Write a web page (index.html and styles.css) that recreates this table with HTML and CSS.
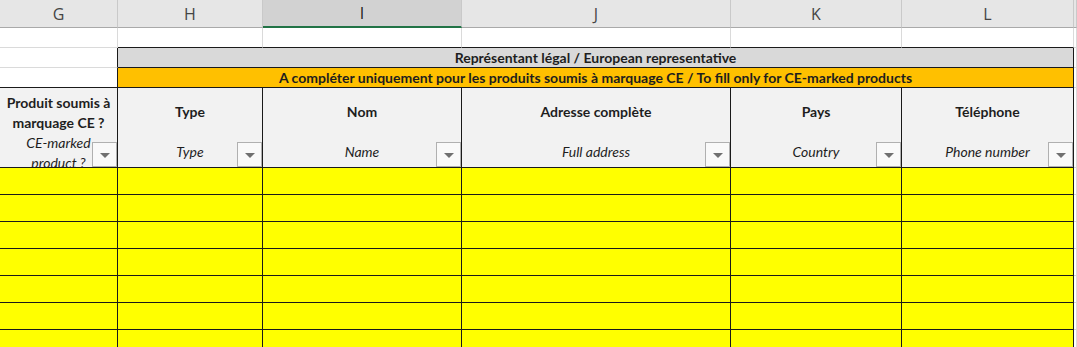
FILE: index.html
```html
<!DOCTYPE html>
<html lang="fr">
<head>
    <meta charset="UTF-8">
    <meta name="viewport" content="width=device-width, initial-scale=1.0">
    <title>Représentant légal</title>
    <link rel="stylesheet" href="styles.css">
</head>
<body>
    <div class="sheet">
        <!-- column letters -->
        <div class="col-head">G</div>
        <div class="col-head">H</div>
        <div class="col-head selected">I</div>
        <div class="col-head">J</div>
        <div class="col-head">K</div>
        <div class="col-head">L</div>
        <div class="col-head"></div>

        <!-- empty first row -->
        <div class="cell"></div>
        <div class="cell edge-bottom"></div>
        <div class="cell edge-bottom"></div>
        <div class="cell edge-bottom"></div>
        <div class="cell edge-bottom"></div>
        <div class="cell edge-bottom"></div>
        <div class="cell"></div>

        <!-- group titles -->
        <div class="cell edge-right"></div>
        <div class="cell band grey">Représentant légal / European representative</div>
        <div class="cell"></div>

        <div class="cell edge-right edge-bottom"></div>
        <div class="cell band orange">A compléter uniquement pour les produits soumis à marquage CE / To fill only for CE-marked products</div>
        <div class="cell"></div>

        <!-- field headers -->
        <div class="cell head head-tall">
            <span class="fr">Produit soumis à</span>
            <span class="fr">marquage CE ?</span>
            <span class="en">CE-marked</span>
            <span class="en">product ?</span>
            <span class="filter"></span>
        </div>
        <div class="cell head">
            <span class="fr">Type</span>
            <span class="en">Type</span>
            <span class="filter"></span>
        </div>
        <div class="cell head">
            <span class="fr">Nom</span>
            <span class="en">Name</span>
            <span class="filter"></span>
        </div>
        <div class="cell head">
            <span class="fr">Adresse complète</span>
            <span class="en">Full address</span>
            <span class="filter"></span>
        </div>
        <div class="cell head">
            <span class="fr">Pays</span>
            <span class="en">Country</span>
            <span class="filter"></span>
        </div>
        <div class="cell head">
            <span class="fr">Téléphone</span>
            <span class="en">Phone number</span>
            <span class="filter"></span>
        </div>
        <div class="cell"></div>

        <!-- input rows -->
        <div class="cell fill"></div><div class="cell fill"></div><div class="cell fill"></div><div class="cell fill"></div><div class="cell fill"></div><div class="cell fill"></div><div class="cell"></div>
        <div class="cell fill"></div><div class="cell fill"></div><div class="cell fill"></div><div class="cell fill"></div><div class="cell fill"></div><div class="cell fill"></div><div class="cell"></div>
        <div class="cell fill"></div><div class="cell fill"></div><div class="cell fill"></div><div class="cell fill"></div><div class="cell fill"></div><div class="cell fill"></div><div class="cell"></div>
        <div class="cell fill"></div><div class="cell fill"></div><div class="cell fill"></div><div class="cell fill"></div><div class="cell fill"></div><div class="cell fill"></div><div class="cell"></div>
        <div class="cell fill"></div><div class="cell fill"></div><div class="cell fill"></div><div class="cell fill"></div><div class="cell fill"></div><div class="cell fill"></div><div class="cell"></div>
        <div class="cell fill"></div><div class="cell fill"></div><div class="cell fill"></div><div class="cell fill"></div><div class="cell fill"></div><div class="cell fill"></div><div class="cell"></div>
        <div class="cell fill"></div><div class="cell fill"></div><div class="cell fill"></div><div class="cell fill"></div><div class="cell fill"></div><div class="cell fill"></div><div class="cell"></div>
    </div>
</body>
</html>
```

FILE: styles.css
```css
* {
    margin: 0;
    padding: 0;
    box-sizing: border-box;
}

body {
    background: #fff;
    overflow: hidden;
    font-family: 'Lato', 'Liberation Sans', sans-serif;
    color: #1e1e1e;
}

.sheet {
    display: grid;
    grid-template-columns: 118px 145px 199px 269px 171px 172px 1fr;
    grid-template-rows: 28px 20px 20px 20px 80px repeat(7, 27px);
    width: 1077px;
}

/* column letters bar */
.col-head {
    background: #e6e6e6;
    border-right: 1px solid #c9c9c9;
    border-bottom: 1px solid #a9a9a9;
    font-family: 'Open Sans', 'Noto Sans', sans-serif;
    font-size: 16px;
    color: #444;
    display: flex;
    align-items: center;
    justify-content: center;
}

.col-head.selected {
    background: #d2d2d2;
    color: #222;
    border-bottom: 2px solid #217346;
}

/* plain cell with light grid lines */
.cell {
    border-right: 1px solid #dadada;
    border-bottom: 1px solid #dadada;
}

.cell.edge-right {
    border-right-color: #1a1a1a;
}

.cell.edge-bottom {
    border-bottom-color: #1a1a1a;
}

.band {
    grid-column: span 5;
    border-color: #1a1a1a;
    font-weight: bold;
    font-size: 14px;
    text-align: center;
    line-height: 19px;
}

.band.grey {
    background: #d9d9d9;
}

.band.orange {
    background: #ffc000;
}

.head {
    position: relative;
    background: #f2f2f2;
    border-color: #1a1a1a;
    display: flex;
    flex-direction: column;
    align-items: center;
    padding-top: 14px;
    font-size: 14px;
    line-height: 20px;
    overflow: hidden;
}

.head .fr {
    font-weight: bold;
    margin-bottom: 20px;
}

.head .en {
    font-style: italic;
}

.head-tall {
    padding-top: 5px;
}

.head-tall .fr {
    margin-bottom: 0;
}

/* autofilter dropdown button */
.filter {
    position: absolute;
    right: 0;
    bottom: 0;
    width: 25px;
    height: 25px;
    background: #f9f9f9;
    border: 1px solid #b0b0b0;
    display: flex;
    align-items: center;
    justify-content: center;
}

.filter::after {
    content: "";
    margin-top: 1px;
    border-left: 5px solid transparent;
    border-right: 5px solid transparent;
    border-top: 5px solid #707070;
}

.fill {
    background: #ffff00;
    border-color: #1a1a1a;
}
```
